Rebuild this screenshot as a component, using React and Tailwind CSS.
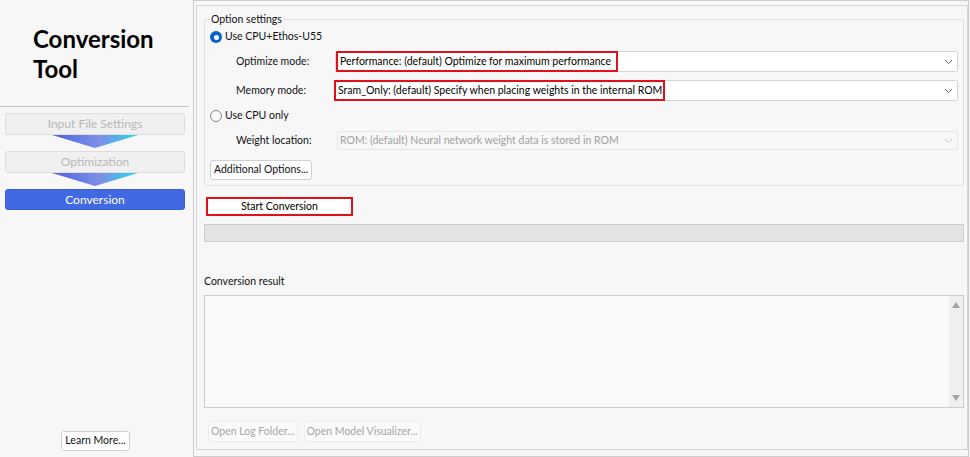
const font = { fontFamily: 'Lato, "Noto Sans", sans-serif' };

function StepButton({ label, active }) {
  return (
    <div
      className={
        active
          ? "h-[21px] rounded-[3px] border border-[#3a5fd6] bg-[#4169e1] text-white text-[12px] flex items-center justify-center"
          : "h-[22px] rounded-[3px] border border-[#dcdcdc] bg-[#f0f0f0] text-[#b8b8b8] text-[12px] flex items-center justify-center"
      }
    >
      {label}
    </div>
  );
}

function StepArrow() {
  return (
    <div className="flex justify-center">
      <svg width="86" height="14" viewBox="0 0 86 14">
        <defs>
          <linearGradient id="arrowFill" x1="0" y1="0" x2="1" y2="0">
            <stop offset="0" stopColor="#4a63df" />
            <stop offset="0.55" stopColor="#7e8ee6" />
            <stop offset="1" stopColor="#28d8ee" />
          </linearGradient>
        </defs>
        <polygon points="0,0 86,0 43,13" fill="url(#arrowFill)" />
      </svg>
    </div>
  );
}

function Radio({ checked, label }) {
  return (
    <div className="flex items-center gap-[3px] h-[14px]">
      {checked ? (
        <span className="w-[12px] h-[12px] rounded-full bg-[#0a63c9] flex items-center justify-center">
          <span className="w-[5px] h-[5px] rounded-full bg-white" />
        </span>
      ) : (
        <span className="w-[12px] h-[12px] rounded-full border border-[#8a8a8a] bg-[#fafafa]" />
      )}
      <span className="text-[10.5px] text-[#111]">{label}</span>
    </div>
  );
}

function Chevron({ color }) {
  return (
    <svg width="9" height="6" viewBox="0 0 9 6" className="mr-[4px]">
      <path d="M1 1 L4.5 4.5 L8 1" fill="none" stroke={color} strokeWidth="1" />
    </svg>
  );
}

function ComboRow({ label, value, boxWidth, disabled, boxShift = 0 }) {
  return (
    <div className="flex items-center">
      <span className="w-[125px] pl-[26px] whitespace-nowrap text-[10.5px] text-[#111] shrink-0">{label}</span>
      <div
        className={
          disabled
            ? "flex-1 ml-[2px] h-[19px] rounded-[2px] border border-[#e6e6e6] bg-[#f7f7f7] flex items-center justify-between"
            : "flex-1 h-[21px] rounded-[2px] border border-[#d6d6d6] bg-white flex items-center justify-between"
        }
      >
        {boxWidth ? (
          <span
            className="h-[21px] border-2 border-[#e3101c] flex items-center pl-[2px] text-[10.5px] text-[#000] whitespace-nowrap"
            style={{ width: boxWidth, marginLeft: boxShift }}
          >
            {value}
          </span>
        ) : (
          <span className="pl-[2px] text-[10.5px] text-[#a2a2a2] whitespace-nowrap">{value}</span>
        )}
        <Chevron color={disabled ? "#c8c8c8" : "#6a6a6a"} />
      </div>
    </div>
  );
}

function SmallButton({ children, disabled, className = "" }) {
  return (
    <div
      className={
        "h-[20px] rounded-[3px] border flex items-center text-[10.5px] whitespace-nowrap " +
        (disabled ? "border-[#ececec] bg-[#fafafa] text-[#a6a6a6] " : "border-[#d0d0d0] bg-white text-[#111] ") +
        className
      }
    >
      {children}
    </div>
  );
}

export default function App() {
  return (
    <div className="w-[970px] h-[457px] bg-[#f7f7f7] flex overflow-hidden" style={font}>
      {/* sidebar */}
      <aside className="w-[193px] shrink-0 flex flex-col">
        <div className="h-[107px] pl-[33px] pt-[24px] border-b border-[#c8c8c8] mr-[4px]">
          <h1 className="text-[24px] leading-[30px] font-bold text-black">
            Conversion
            <br />
            Tool
          </h1>
        </div>
        <nav className="px-[5px] pt-[6px] pr-[8px] flex flex-col">
          <StepButton label="Input File Settings" />
          <StepArrow />
          <div className="mt-[2px]">
            <StepButton label="Optimization" />
          </div>
          <StepArrow />
          <div className="mt-[2px]">
            <StepButton label="Conversion" active />
          </div>
        </nav>
        <div className="flex-1" />
        <div className="flex justify-center pb-[6px] pr-[2px]">
          <SmallButton className="px-[3px]">Learn More...</SmallButton>
        </div>
      </aside>

      {/* main panel */}
      <main className="w-[776px] h-[457px] border border-[#cdcdcd] flex">
        <div className="flex-1 ml-[2px] mt-[4px] mb-[6px] border border-[#d6d6d6] flex flex-col pl-[7px] pr-[3px]">
          <fieldset className="mt-[6px] border border-[#e0e0e0] rounded-[2px] pl-[5px] pr-[5px] pb-[6px] h-[174px]">
            <legend className="text-[10.5px] text-[#111] px-[1px] leading-[14px]">Option settings</legend>
            <div className="flex flex-col">
              <div className="mt-[4px]">
                <Radio checked label="Use CPU+Ethos-U55" />
              </div>
              <div className="mt-[7px]">
                <ComboRow
                  label="Optimize mode:"
                  value="Performance: (default) Optimize for maximum performance"
                  boxWidth={282}
                />
              </div>
              <div className="mt-[8px]">
                <ComboRow
                  label="Memory mode:"
                  value="Sram_Only: (default) Specify when placing weights in the internal ROM"
                  boxWidth={331}
                  boxShift={-2}
                />
              </div>
              <div className="mt-[8px]">
                <Radio label="Use CPU only" />
              </div>
              <div className="mt-[8px]">
                <ComboRow
                  label="Weight location:"
                  value="ROM: (default) Neural network weight data is stored in ROM"
                  disabled
                />
              </div>
              <div className="mt-[10px] flex">
                <SmallButton className="h-[19px] px-[3px] border-[#cfcfcf]">Additional Options...</SmallButton>
              </div>
            </div>
          </fieldset>

          <div className="mt-[11px] flex">
            <div className="ml-[2px] w-[147px] h-[19px] border-2 border-[#e3101c] bg-white flex items-center justify-center text-[10.5px] text-[#000]">
              Start Conversion
            </div>
          </div>

          <div className="mt-[8px] h-[18px] border border-[#cdcdcd] bg-[#e3e3e3]" />

          <div className="mt-[32px] text-[10.5px] text-[#111] leading-[14px]">Conversion result</div>

          <div className="mt-[7px] h-[113px] border border-[#cdcdcd] bg-[#f9f9f9] flex justify-end">
            <div className="w-[14px] bg-[#efefef] flex flex-col items-center justify-between py-[6px]">
              <svg width="8" height="6" viewBox="0 0 8 6">
                <polygon points="4,0 8,6 0,6" fill="#a4a4a4" />
              </svg>
              <svg width="8" height="6" viewBox="0 0 8 6">
                <polygon points="0,0 8,0 4,6" fill="#a4a4a4" />
              </svg>
            </div>
          </div>

          <div className="mt-[13px] flex gap-[6px] pl-[4px]">
            <SmallButton disabled className="h-[21px] px-[2px]">Open Log Folder...</SmallButton>
            <SmallButton disabled className="h-[21px] px-[2px]">Open Model Visualizer...</SmallButton>
          </div>
        </div>
      </main>
    </div>
  );
}
